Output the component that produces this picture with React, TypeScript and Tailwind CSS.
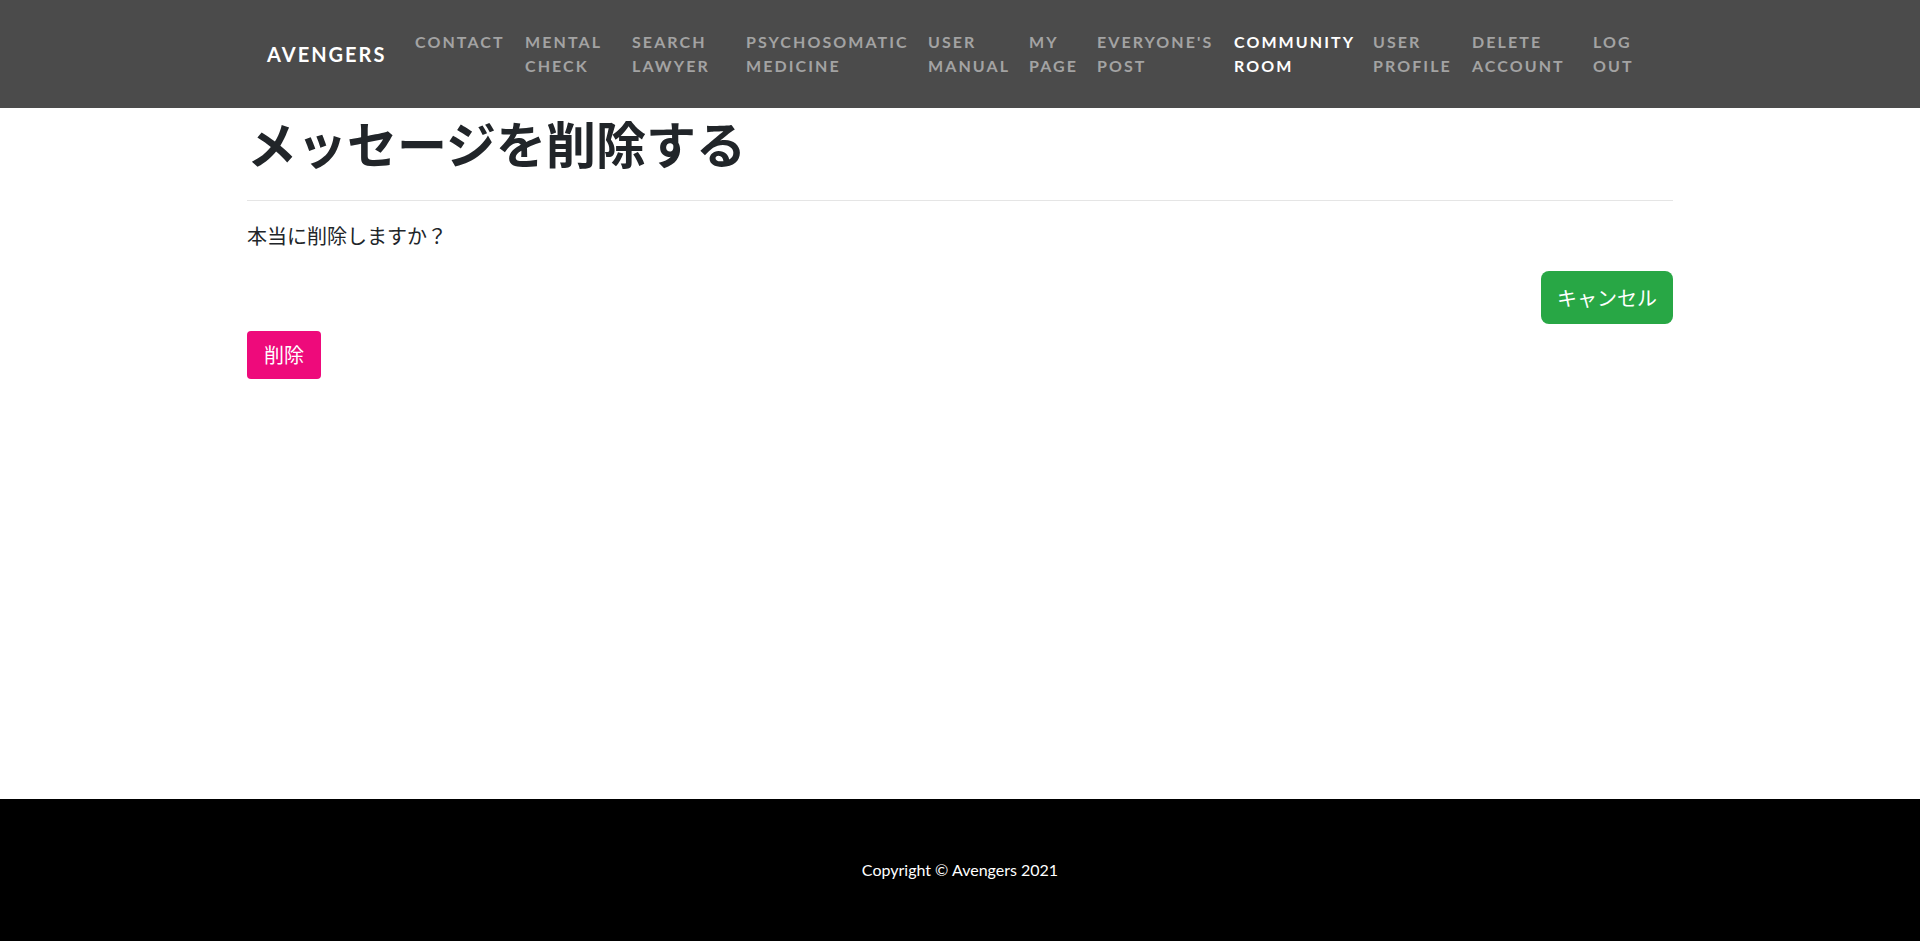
import React from "react";

const navItems: { label: string; w: string; active?: boolean }[] = [
  { label: "CONTACT", w: "w-[110px]" },
  { label: "MENTAL CHECK", w: "w-[107px]" },
  { label: "SEARCH LAWYER", w: "w-[114px]" },
  { label: "PSYCHOSOMATIC MEDICINE", w: "w-[182px]" },
  { label: "USER MANUAL", w: "w-[101px]" },
  { label: "MY PAGE", w: "w-[68px]" },
  { label: "EVERYONE'S POST", w: "w-[137px]" },
  { label: "COMMUNITY ROOM", w: "w-[139px]", active: true },
  { label: "USER PROFILE", w: "w-[99px]" },
  { label: "DELETE ACCOUNT", w: "w-[121px]" },
  { label: "LOG OUT", w: "w-[60px]" },
];

export default function App() {
  return (
    <div className="min-h-screen bg-white flex flex-col font-['Lato','Noto_Sans_CJK_JP',sans-serif]">
      <nav className="bg-[#4b4b4b] h-[108px] w-full">
        <div className="w-[1426px] mx-auto h-full flex items-center pl-[20px]">
          <a className="text-white font-bold text-[20px] tracking-[0.1em] leading-none w-[148px]">
            AVENGERS
          </a>
          <ul className="flex items-start">
            {navItems.map((it) => (
              <li key={it.label} className={it.w + " shrink-0"}>
                <a
                  className={
                    "block w-min text-[16px] leading-[24px] font-bold tracking-[0.13em] " +
                    (it.active ? "text-white" : "text-[#a3a3a3]")
                  }
                >
                  {it.label}
                </a>
              </li>
            ))}
          </ul>
        </div>
      </nav>

      <main className="h-[691px] w-full">
        <div className="w-[1426px] mx-auto text-[#212529]">
          <h1 className="mt-[4px] text-[50px] leading-[60px] font-bold font-['Noto_Sans_CJK_JP',sans-serif]">
            メッセージを削除する
          </h1>
          <hr className="mt-[28px] border-0 border-t border-[#e5e5e5]" />
          <p className="mt-[20px] text-[20px] leading-[30px] font-['Noto_Sans_CJK_JP',sans-serif]">
            本当に削除しますか？
          </p>
          <div className="mt-[20px] flex justify-end">
            <button className="h-[53px] px-[16px] rounded-[8px] bg-[#28a745] text-white text-[20px] font-['Noto_Sans_CJK_JP',sans-serif]">
              キャンセル
            </button>
          </div>
          <div className="mt-[7px] flex">
            <button className="h-[48px] px-[17px] rounded-[4px] bg-[#ee0a7b] text-white text-[20px] font-['Noto_Sans_CJK_JP',sans-serif]">
              削除
            </button>
          </div>
        </div>
      </main>

      <footer className="bg-black h-[142px] w-full flex items-center justify-center">
        <p className="text-white text-[16px] font-['Lato',sans-serif]">
          Copyright © Avengers 2021
        </p>
      </footer>
    </div>
  );
}
